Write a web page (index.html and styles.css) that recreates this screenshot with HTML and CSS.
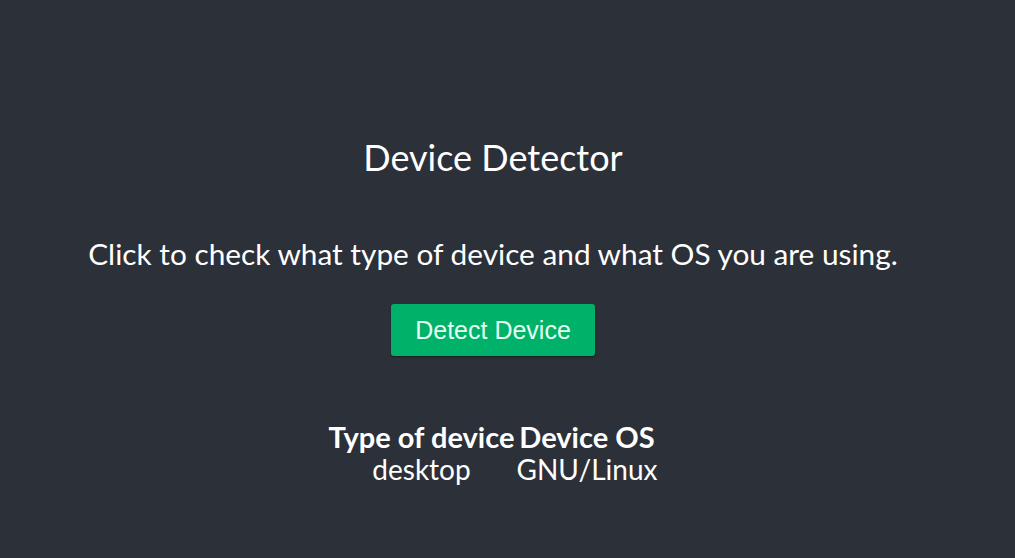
FILE: index.html
```html
<!DOCTYPE html>
<html>
<head>
<meta charset="utf-8">
<link rel="stylesheet" href="styles.css">
</head>
<body>
<main class="app">
  <h1 class="title">Device Detector</h1>
  <p class="lead">Click to check what type of device and what OS you are using.</p>
  <button class="btn">Detect Device</button>
  <table class="results">
    <thead>
      <tr><th>Type of device</th><th>Device OS</th></tr>
    </thead>
    <tbody>
      <tr><td>desktop</td><td>GNU/Linux</td></tr>
    </tbody>
  </table>
</main>
</body>
</html>
```
FILE: styles.css
```css
html, body {
  margin: 0;
  padding: 0;
  background: #2c3038;
  height: 100%;
}
body {
  font-family: Lato, "Noto Sans", sans-serif;
  color: #ffffff;
}
.app {
  width: 986px;
  display: flex;
  flex-direction: column;
  align-items: center;
  text-align: center;
  padding-top: 133px;
}
.title {
  margin: 0;
  font-size: 36px;
  font-weight: 400;
  line-height: 48px;
}
.lead {
  margin: 53px 0 0;
  font-size: 29.8px;
  line-height: 40px;
}
.btn {
  margin-top: 30px;
  width: 204px;
  height: 52px;
  border: none;
  border-radius: 3px;
  background: #00b16a;
  color: #e2fff0;
  font-family: "Liberation Sans", Arial, sans-serif;
  font-size: 25px;
  box-shadow: 0 1px 2px rgba(0,0,0,0.4);
}
.results {
  margin-top: 64px;
  border-spacing: 2px 0;
  font-size: 28px;
}
.results th {
  font-weight: 700;
  font-size: 29px;
  padding: 0;
  line-height: 33px;
}
.results td {
  padding: 0;
  line-height: 33px;
}
```
